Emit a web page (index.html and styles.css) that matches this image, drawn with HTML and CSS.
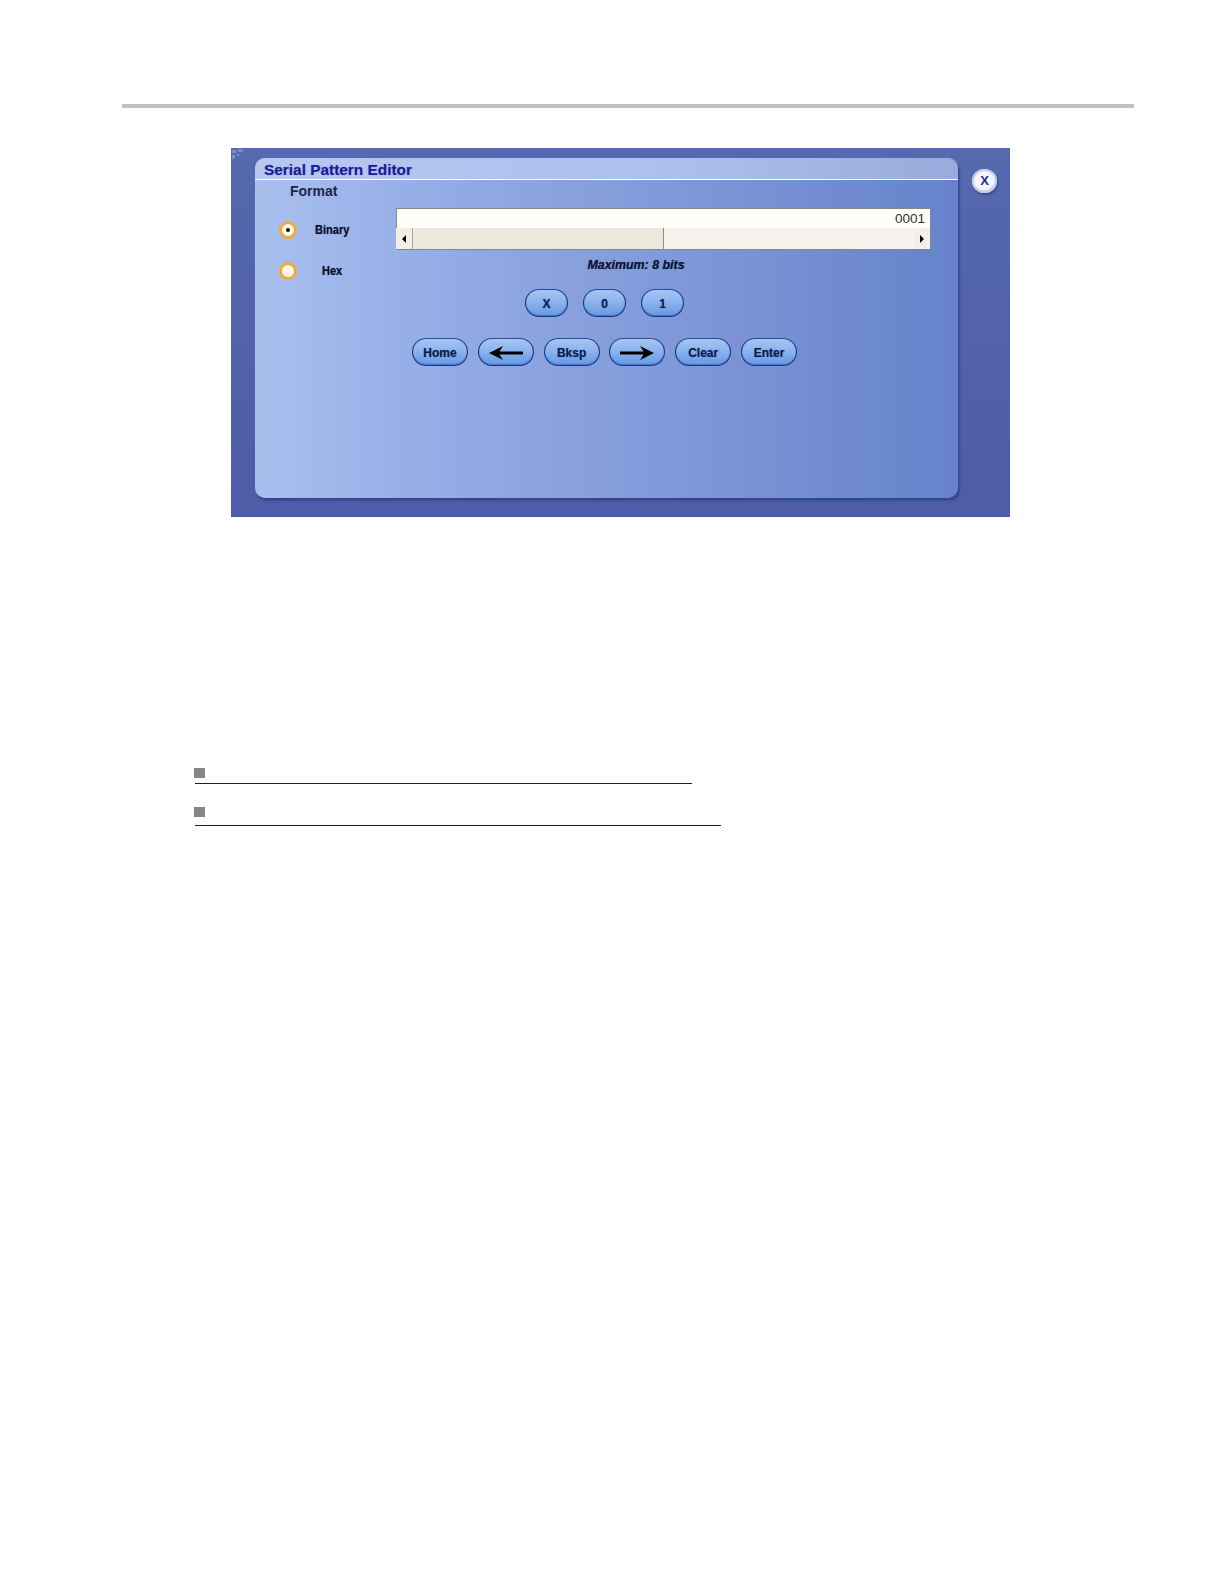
FILE: index.html
```html
<!DOCTYPE html>
<html lang="en">
<head>
  <meta charset="UTF-8">
  <title>Serial Pattern Editor</title>
  <link rel="stylesheet" href="styles.css">
</head>
<body>
<div class="page">
  <div class="rule"></div>

  <div class="shot">
    <svg class="corner" width="12" height="11" viewBox="0 0 12 11">
      <path d="M0 1h4v3H0zM6 0h5v3H6zM0 6h3v4H0zM5 5h2v2H5z" fill="#8d9ad0" opacity=".7"/>
    </svg>

    <div class="panel">
      <div class="title-bar">Serial Pattern Editor</div>
      <div class="panel-body">
        <div class="format">
          <div class="format-title">Format</div>
          <div class="radio-row">
            <span class="radio is-on"></span>
            <span class="radio-label">Binary</span>
          </div>
          <div class="radio-row">
            <span class="radio"></span>
            <span class="radio-label is-hex">Hex</span>
          </div>
        </div>

        <div class="editor">
          <div class="field">
            <div class="field-value">0001</div>
            <div class="scrollbar">
              <div class="scroll-btn"><span class="tri-left"></span></div>
              <div class="scroll-thumb"></div>
              <div class="scroll-track"></div>
              <div class="scroll-btn"><span class="tri-right"></span></div>
            </div>
          </div>
          <div class="max-note">Maximum: 8 bits</div>

          <div class="keys">
            <div class="key-row small">
              <button class="key">X</button>
              <button class="key">0</button>
              <button class="key">1</button>
            </div>
            <div class="key-row">
              <button class="key">Home</button>
              <button class="key" aria-label="Left">
                <svg width="36" height="16" viewBox="0 0 36 16"><path d="M1 8 15 1 11.5 6.6H35v2.8H11.5L15 15z" fill="#000"/></svg>
              </button>
              <button class="key">Bksp</button>
              <button class="key" aria-label="Right">
                <svg width="36" height="16" viewBox="0 0 36 16"><path d="M35 8 21 1 24.5 6.6H1v2.8h23.5L21 15z" fill="#000"/></svg>
              </button>
              <button class="key">Clear</button>
              <button class="key">Enter</button>
            </div>
          </div>
        </div>
      </div>
    </div>

    <button class="close">X</button>
  </div>

  <div class="links">
    <div class="link-item short"><span class="square"></span></div>
    <div class="link-item long"><span class="square"></span></div>
  </div>
</div>
</body>
</html>
```

FILE: styles.css
```css
html, body {
  margin: 0;
  background: #fff;
}
body {
  font-family: "Liberation Sans", Arial, sans-serif;
}
.page {
  padding: 104px 0 0 122px;
}
.rule {
  width: 1012px;
  height: 4px;
  background: #c2c2c2;
}

/* screenshot of the dialog */
.shot {
  position: relative;
  display: flex;
  box-sizing: border-box;
  width: 779px;
  height: 369px;
  margin: 40px 0 0 109px;
  padding: 10px 0 0 24px;
  background: linear-gradient(180deg, #5569ae, #4e5ba8);
}
.corner {
  position: absolute;
  top: 1px;
  left: 1px;
}
.panel {
  width: 703px;
  height: 340px;
  border-radius: 10px;
  background: linear-gradient(90deg, #a9bfee 0%, #94ade6 25%, #7f98d8 60%, #6582cb 100%);
  box-shadow: 1px 2px 0 #33478f, 2px 3px 2px #3e4e98;
}
.title-bar {
  box-sizing: border-box;
  height: 22px;
  padding: 3px 0 0 9px;
  border-radius: 10px 10px 0 0;
  border-bottom: 1px solid #fff;
  background: linear-gradient(90deg, #b6c7f0, #aebfec 60%, #9aaadc);
  color: #1c1c96;
  font-size: 15.4px;
  font-weight: bold;
  line-height: 17px;
  text-shadow: 0 0 1px rgba(28, 28, 150, .4);
}
.panel-body {
  display: flex;
}
.format {
  width: 141px;
}
.format-title {
  margin: 3px 0 0 35px;
  color: #1a2450;
  font-size: 14px;
  font-weight: bold;
  line-height: 16px;
}
.radio-row {
  display: flex;
  align-items: center;
  height: 20px;
  margin: 0 0 21px 24px;
}
.format-title + .radio-row {
  margin-top: 21px;
}
.radio {
  display: flex;
  align-items: center;
  justify-content: center;
  box-sizing: border-box;
  width: 18px;
  height: 18px;
  border: 3px solid #f0aa3c;
  border-radius: 50%;
  background: #fdf8ea;
}
.radio.is-on::after {
  content: "";
  width: 4px;
  height: 4px;
  border-radius: 50%;
  background: #111;
}
.radio-label {
  margin-left: 18px;
  color: #0a0f2a;
  font-size: 12px;
  font-weight: bold;
  text-shadow: 0 0 1px rgba(10, 15, 42, .5);
  transform: scaleX(.92);
  transform-origin: left center;
}
.radio-label.is-hex {
  margin-left: 25px;
}

.editor {
  width: 534px;
  padding-top: 28px;
}
.field {
  border-top: 1px solid #8a8a84;
  border-left: 1px solid #8a8a84;
  box-shadow: 1px 1px 0 #7d87a0;
}
.field-value {
  height: 19px;
  padding-right: 5px;
  background: #fffefb;
  color: #333;
  font-size: 13.5px;
  line-height: 19px;
  text-align: right;
}
.scrollbar {
  display: flex;
  height: 21px;
  margin-left: -1px;
}
.scroll-btn {
  display: flex;
  align-items: center;
  justify-content: center;
  width: 16px;
  background: #f2efe6;
}
.tri-left, .tri-right {
  width: 0;
  height: 0;
  border-top: 4px solid transparent;
  border-bottom: 4px solid transparent;
}
.tri-left {
  border-right: 4px solid #000;
}
.tri-right {
  border-left: 4px solid #000;
}
.scroll-thumb {
  width: 250px;
  border-left: 1px solid #a8a69a;
  border-right: 1px solid #8e8c84;
  background: #ece8da;
}
.scroll-track {
  flex: 1;
  background: repeating-conic-gradient(#f8f6ef 0 25%, #f2f0e6 0 50%) 0 0 / 2px 2px;
}
.max-note {
  margin-top: 9px;
  padding-right: 54px;
  color: #0c1230;
  font-size: 12.4px;
  font-style: italic;
  font-weight: bold;
  line-height: 15px;
  text-align: center;
  text-shadow: 0 0 1px rgba(12, 18, 48, .5);
}

.keys {
  width: 385px;
  margin: 16px 0 0 16px;
}
.key-row {
  display: flex;
  justify-content: space-between;
  height: 28px;
}
.key-row.small {
  justify-content: center;
  gap: 15px;
  margin-bottom: 21px;
}
.key {
  display: flex;
  align-items: center;
  justify-content: center;
  width: 56px;
  height: 100%;
  padding: 1px 0 0;
  border: 1.5px solid #1d3380;
  border-top-color: #2a4a9c;
  border-radius: 14px;
  background: linear-gradient(180deg, #a6c6f2 0%, #8cb4ee 45%, #6698e2 100%);
  box-shadow: inset 0 -1px 1px #4474c8;
  color: #0c1d50;
  font-family: inherit;
  font-size: 12px;
  font-weight: bold;
  text-shadow: 0 0 1px rgba(12, 29, 80, .5);
}
.key-row.small .key {
  width: 43px;
}

.close {
  width: 25px;
  height: 24px;
  margin: 11px 0 0 14px;
  padding: 0 0 2px;
  border: none;
  border-radius: 50%;
  background: #f4f6fc;
  box-shadow: inset 0 0 0 2px #c6cfe8, inset -1px -2px 2px #9aa4c4, 1px 2px 2px #38488e;
  color: #1c2c96;
  font-family: inherit;
  font-size: 13px;
  font-weight: bold;
}

/* empty link lines under the dialog */
.links {
  margin: 251px 0 0 73px;
}
.link-item {
  height: 15px;
  border-bottom: 1px solid #14148c;
}
.link-item.short {
  width: 497px;
}
.link-item.long {
  width: 526px;
  height: 18px;
  margin-top: 23px;
}
.square {
  display: block;
  width: 11px;
  height: 10px;
  margin-left: -1px;
  background: #868686;
}
```
